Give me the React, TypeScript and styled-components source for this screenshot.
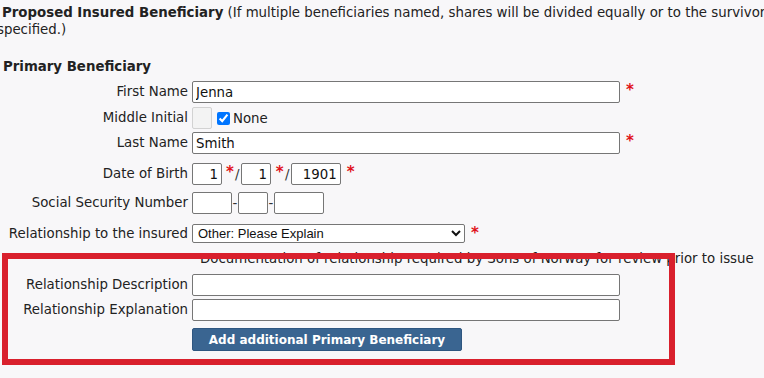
import React from "react";
import styled, { createGlobalStyle } from "styled-components";

const Global = createGlobalStyle`
  html, body { margin: 0; padding: 0; background: #f8f7f9; }
  body { font-family: "DejaVu Sans", Verdana, sans-serif; font-size: 13.33px; color: #222; }
`;

const Page = styled.div`
  position: relative;
  width: 764px;
  height: 378px;
  overflow: hidden;
`;

const Intro = styled.p`
  margin: 0;
  padding: 4px 0 0 0;
  margin-left: -3px;
  text-indent: 5px;
  line-height: 17px;
  width: 900px;
`;

const Strong = styled.b`
  font-weight: bold;
`;

const SectionTitle = styled.h3`
  margin: 21px 0 0 3px;
  font-size: 13.33px;
  line-height: 16px;
  font-weight: bold;
`;

const Form = styled.div`
  display: flex;
  flex-direction: column;
`;

const Row = styled.div<{ $gap: number }>`
  display: grid;
  grid-template-columns: 188px 1fr;
  column-gap: 4px;
  align-items: center;
  margin-top: ${(p) => p.$gap}px;
`;

const Label = styled.label`
  text-align: right;
  white-space: nowrap;
  line-height: 16px;
`;

const Field = styled.div`
  display: flex;
  align-items: center;
  white-space: nowrap;
`;

const TextInput = styled.input<{ $w: number; $right?: boolean }>`
  box-sizing: border-box;
  width: ${(p) => p.$w}px;
  height: 22px;
  border: 1px solid #767676;
  border-radius: 2px;
  background: #fff;
  font-family: "DejaVu Sans", Verdana, sans-serif;
  font-size: 13.33px;
  color: #111;
  padding: 0 3px;
  margin: 0;
  text-align: ${(p) => (p.$right ? "right" : "left")};
`;

const DisabledInput = styled.input`
  box-sizing: border-box;
  width: 20px;
  height: 22px;
  border: 1px solid #d2d2d2;
  border-radius: 2px;
  background: #f3f3f3;
  margin: 0;
  padding: 0;
`;

const Check = styled.input`
  width: 13px;
  height: 13px;
  margin: 0 3px 0 5px;
  accent-color: #0075ff;
`;

const Req = styled.span<{ $ml?: number }>`
  color: #e0121b;
  font-weight: bold;
  font-size: 15px;
  margin-left: ${(p) => p.$ml ?? 6}px;
  align-self: flex-start;
  line-height: 16px;
  margin-top: 1px;
`;

const Sep = styled.span<{ $w: number }>`
  display: inline-block;
  width: ${(p) => p.$w}px;
  text-align: center;
  color: #333;
`;

const Select = styled.select`
  box-sizing: border-box;
  width: 273px;
  height: 19px;
  border: 1px solid #767676;
  border-radius: 2px;
  background: #fff;
  font-family: "Liberation Sans", Arial, sans-serif;
  font-size: 13px;
  color: #111;
  padding: 0 0 0 1px;
  margin: 0;
`;

const Note = styled.div`
  margin: 8px 0 0 200px;
  white-space: nowrap;
  line-height: 16px;
  color: #222;
`;

const Button = styled.button`
  box-sizing: border-box;
  width: 270px;
  height: 23px;
  background: #3a6591;
  border: 1px solid #2f5680;
  border-radius: 2px;
  color: #fff;
  font-family: "DejaVu Sans", Verdana, sans-serif;
  font-size: 12px;
  font-weight: bold;
  padding: 0;
  margin: 0;
`;

const Highlight = styled.div`
  position: absolute;
  left: 2px;
  top: 253px;
  width: 673px;
  height: 112px;
  box-sizing: border-box;
  border: 6px solid #d9202d;
  pointer-events: none;
`;

export default function App() {
  return (
    <Page>
      <Global />
      <Intro>
        <Strong>Proposed Insured Beneficiary</Strong> (If multiple beneficiaries named, shares will be divided equally or to the survivor unless otherwise specified.)
      </Intro>
      <SectionTitle>Primary Beneficiary</SectionTitle>
      <Form>
        <Row $gap={6}>
          <Label>First Name</Label>
          <Field>
            <TextInput $w={428} defaultValue="Jenna" />
            <Req $ml={6}>*</Req>
          </Field>
        </Row>
        <Row $gap={4}>
          <Label>Middle Initial</Label>
          <Field>
            <DisabledInput disabled />
            <Check type="checkbox" defaultChecked />
            <span>None</span>
          </Field>
        </Row>
        <Row $gap={3}>
          <Label>Last Name</Label>
          <Field>
            <TextInput $w={428} defaultValue="Smith" />
            <Req $ml={6}>*</Req>
          </Field>
        </Row>
        <Row $gap={9}>
          <Label>Date of Birth</Label>
          <Field>
            <TextInput $w={30} $right defaultValue="1" />
            <Req $ml={4}>*</Req>
            <Sep $w={7}>/</Sep>
            <TextInput $w={30} $right defaultValue="1" />
            <Req $ml={5}>*</Req>
            <Sep $w={7}>/</Sep>
            <TextInput $w={50} $right defaultValue="1901" />
            <Req $ml={6}>*</Req>
          </Field>
        </Row>
        <Row $gap={7}>
          <Label>Social Security Number</Label>
          <Field>
            <TextInput $w={40} />
            <Sep $w={6}>-</Sep>
            <TextInput $w={30} />
            <Sep $w={6}>-</Sep>
            <TextInput $w={50} />
          </Field>
        </Row>
        <Row $gap={10}>
          <Label>Relationship to the insured</Label>
          <Field>
            <Select defaultValue="other">
              <option value="other">Other: Please Explain</option>
            </Select>
            <Req $ml={6}>*</Req>
          </Field>
        </Row>
        <Note>Documentation of relationship required by Sons of Norway for review prior to issue</Note>
        <Row $gap={7}>
          <Label>Relationship Description</Label>
          <Field>
            <TextInput $w={428} />
          </Field>
        </Row>
        <Row $gap={3}>
          <Label>Relationship Explanation</Label>
          <Field>
            <TextInput $w={428} />
          </Field>
        </Row>
        <Row $gap={7}>
          <span />
          <Field>
            <Button type="button">Add additional Primary Beneficiary</Button>
          </Field>
        </Row>
      </Form>
      <Highlight />
    </Page>
  );
}
